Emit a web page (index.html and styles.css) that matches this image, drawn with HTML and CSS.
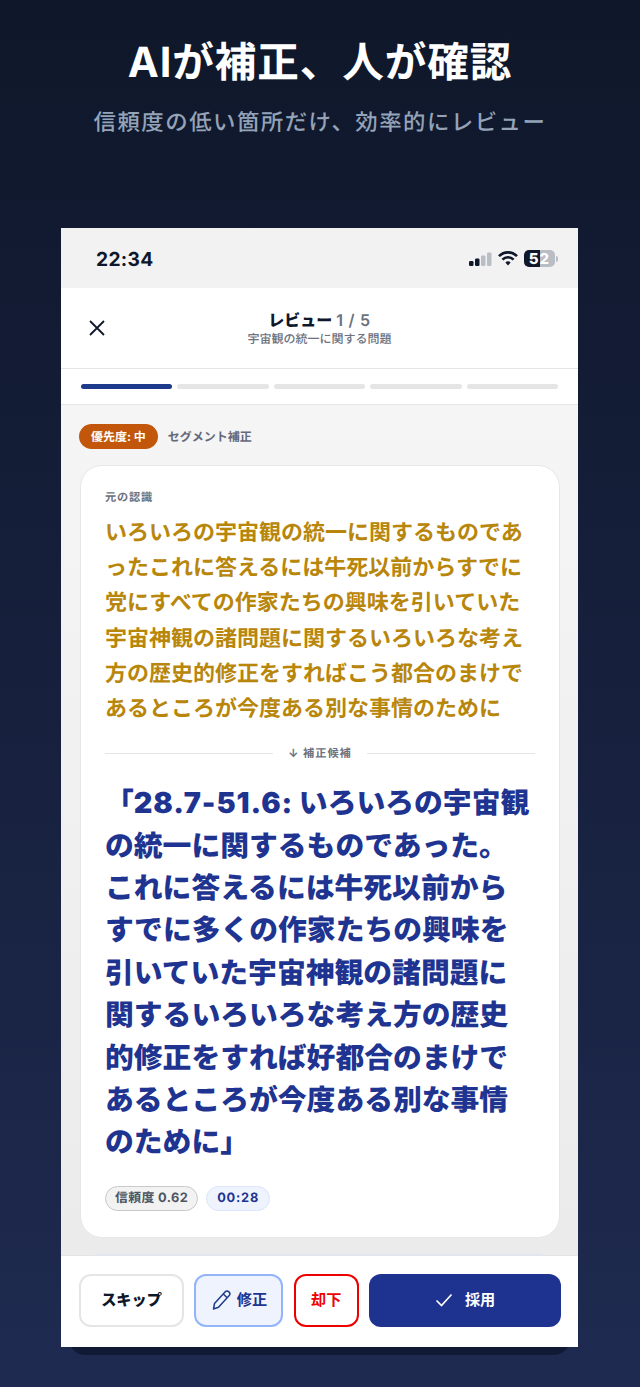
FILE: index.html
```html
<!DOCTYPE html>
<html lang="ja">
<head>
<meta charset="utf-8">
<title>レビュー</title>
<link rel="stylesheet" href="styles.css">
</head>
<body>
<div class="page">
  <header class="hero">
    <h1>AIが補正、人が確認</h1>
    <p>信頼度の低い箇所だけ、効率的にレビュー</p>
  </header>
  <div class="phone">
    <div class="status">
      <span class="time">22:34</span>
      <div class="status-icons">
        <svg class="signal" width="24" height="14" viewBox="0 0 24 14"><rect x="1" y="9" width="4.5" height="5" rx="1.2" fill="#0f172a"/><rect x="7" y="6.500" width="4.500" height="7.500" rx="1.200" fill="#0f172a"/><rect x="13" y="3.500" width="4.500" height="10.500" rx="1.200" fill="#b9bdc4"/><rect x="19" y="0.500" width="4.500" height="13.500" rx="1.200" fill="#b9bdc4"/></svg>
        <svg class="wifi" width="20" height="15" viewBox="0 0 20 15"><path d="M1 5.200 A12.500 12.500 0 0 1 19 5.200" fill="none" stroke="#0f172a" stroke-width="2.600"/><path d="M4.400 8.600 A8 8 0 0 1 15.600 8.600" fill="none" stroke="#0f172a" stroke-width="2.600"/><path d="M7.400 11.500 L10 14.500 L12.600 11.500 A3.600 3.600 0 0 0 7.400 11.500Z" fill="#0f172a"/></svg>
        <div class="battery"><span class="bat-num">52</span></div>
      </div>
    </div>
    <div class="nav">
      <svg class="close" width="20" height="20" viewBox="0 0 20 20"><path d="M3 3 L17 17 M17 3 L3 17" stroke="#0f172a" stroke-width="1.800" fill="none"/></svg>
      <div class="nav-title">
        <div class="nav-main"><b>レビュー</b> <span>1 / 5</span></div>
        <div class="nav-sub">宇宙観の統一に関する問題</div>
      </div>
    </div>
    <div class="progress">
      <i class="seg on"></i><i class="seg"></i><i class="seg"></i><i class="seg"></i><i class="seg"></i>
    </div>
    <main class="content">
      <div class="tags">
        <span class="priority">優先度: 中</span>
        <span class="tag-text">セグメント補正</span>
      </div>
      <section class="card">
        <div class="label">元の認識</div>
        <p class="original">いろいろの宇宙観の統一に関するものであ<br>ったこれに答えるには牛死以前からすでに<br>党にすべての作家たちの興味を引いていた<br>宇宙神観の諸問題に関するいろいろな考え<br>方の歴史的修正をすればこう都合のまけで<br>あるところが今度ある別な事情のために</p>
        <div class="divider"><span class="rule"></span><span class="div-text">↓ 補正候補</span><span class="rule"></span></div>
        <p class="fixed">「<span class="stamp">28.7-51.6:</span> いろいろの宇宙観<br>の統一に関するものであった。<br>これに答えるには牛死以前から<br>すでに多くの作家たちの興味を<br>引いていた宇宙神観の諸問題に<br>関するいろいろな考え方の歴史<br>的修正をすれば好都合のまけで<br>あるところが今度ある別な事情<br>のために」</p>
        <div class="chips">
          <span class="chip grey">信頼度 0.62</span>
          <span class="chip blue">00:28</span>
        </div>
      </section>
      <div class="next-card"></div>
    </main>
    <footer class="actions">
      <button class="btn skip">スキップ</button>
      <button class="btn edit"><svg width="20" height="22" viewBox="0 0 20 22"><path d="M2.500 20 L3.500 14.500 L14 3 A2.600 2.600 0 0 1 18 6.800 L7.500 18.300 Z M12.300 5 L16.200 8.800" fill="none" stroke="#1e3a8a" stroke-width="1.500" stroke-linejoin="round"/></svg>修正</button>
      <button class="btn reject">却下</button>
      <button class="btn adopt"><svg width="18" height="14" viewBox="0 0 18 14"><path d="M1.500 7.500 L6.500 12.500 L16.500 1.500" fill="none" stroke="#fff" stroke-width="1.700"/></svg>採用</button>
    </footer>
  </div>
</div>
</body>
</html>
```
FILE: styles.css
```css
* { box-sizing: border-box; margin: 0; padding: 0; }
html, body { width: 640px; height: 1387px; overflow: hidden; }
body {
  font-family: Inter, "Noto Sans CJK JP", sans-serif;
  text-rendering: geometricPrecision;
  background: linear-gradient(180deg, #0f172a 0%, #1e2a50 100%);
}
.page { height: 1387px; display: flex; flex-direction: column; align-items: center; }
.hero { height: 228px; padding-top: 35px; text-align: center; flex: none; }
.hero h1 { font-size: 41.600px; line-height: 56px; font-weight: 700; color: #fff; white-space: nowrap; letter-spacing: 0.9px; }
.hero p { margin-top: 16px; font-size: 22.400px; line-height: 32px; color: #94a3b8; letter-spacing: 1.500px; font-weight: 500; white-space: nowrap; }

.phone {
  position: relative;
  width: 517px;
  height: 1119px;
  margin-left: -1px;
  background: #f2f2f2;
  display: flex;
  flex-direction: column;
  flex: none;
}
.phone::after {
  content: "";
  position: absolute;
  left: 8px; right: 8px; bottom: -8px;
  height: 30px;
  border-radius: 0 0 16px 16px;
  background: #111a35;
  z-index: -1;
}
.status {
  height: 60px; flex: none;
  display: flex; align-items: center; justify-content: space-between;
  padding: 1px 20px 0 35px;
  background: #f2f2f2;
}
.time { font-size: 19.200px; font-weight: 700; color: #0f172a; letter-spacing: 0.3px; }
.status-icons { display: flex; align-items: center; gap: 6px; }
.battery {
  position: relative; width: 31px; height: 17px; border-radius: 5px;
  background: linear-gradient(90deg, #0f172a 0, #0f172a 52%, #b9bdc4 52%, #b9bdc4 100%);
  text-align: center; margin-right: 3px;
}
.battery::after {
  content: ""; position: absolute; right: -3px; top: 5.500px; width: 2px; height: 6px;
  border-radius: 0 2px 2px 0; background: #b9bdc4;
}
.bat-num { display: block; font-size: 15px; line-height: 17px; font-weight: 800; color: #fff; letter-spacing: 1px; }

.nav {
  position: relative; height: 81px; flex: none; background: #fff;
  border-bottom: 1px solid #e5e5e5;
  display: flex; align-items: center; justify-content: center;
}
.close { position: absolute; left: 26px; top: 30px; }
.nav-title { text-align: center; margin-top: -2px; }
.nav-main { font-size: 16px; line-height: 22px; color: #64748b; font-weight: 600; }
.nav-main b { color: #0f172a; font-weight: 900; }
.nav-main span { color: #6b7280; letter-spacing: 0.7px; }
.nav-sub { font-size: 12px; line-height: 15px; color: #6b7280; font-weight: 500; }

.progress {
  height: 36px; flex: none; background: #fff; border-bottom: 1px solid #e5e5e5;
  display: flex; gap: 5px; padding: 15px 20px 0;
}
.seg { flex: 1; height: 5px; border-radius: 3px; background: #e5e5e5; }
.seg.on { background: #1e3a8a; }

.content {
  flex: 1; min-height: 0; overflow: hidden;
  background: linear-gradient(180deg, #f5f5f5, #ebebeb);
  padding: 19px 18px 0;
}
.tags { display: flex; align-items: center; gap: 10px; height: 25px; }
.priority {
  background: #c2570c; color: #fff; font-size: 12px; font-weight: 700;
  height: 25px; line-height: 25px; padding: 0 12px; border-radius: 13px;
}
.tag-text { font-size: 12px; font-weight: 600; color: #64687a; }

.card {
  margin: 16px 0 0 1px; height: 773px;
  background: #fff; border: 1px solid #e7e7e7; border-radius: 22px;
  padding: 23px 24px 0;
}
.label { font-size: 11.200px; line-height: 16px; font-weight: 700; color: #6b7280; letter-spacing: 0.8px; }
.original {
  margin-top: 11px; font-size: 22px; line-height: 35.200px; font-weight: 700; color: #b8860b; white-space: nowrap;
}
.divider { display: flex; align-items: center; gap: 10px; margin-top: 18px; height: 16px; }
.rule { flex: 1; height: 1px; background: #e5e5e5; }
.div-text { font-size: 11.200px; font-weight: 700; color: #6b7280; letter-spacing: 1px; padding: 0 5px; }
.fixed {
  margin-top: 21px; font-size: 28.800px; line-height: 42.400px; font-weight: 900; color: #1e3490; white-space: nowrap;
}
.stamp { letter-spacing: 0.9px; }
.chips { display: flex; gap: 8px; margin-top: 22px; }
.chip { height: 25px; line-height: 23px; border-radius: 13px; font-size: 12.800px; font-weight: 700; border: 1px solid; letter-spacing: 0.4px; }
.chip.grey { padding: 0 9px; background: #f2f2f2; border-color: #c9c9c9; color: #4b5563; }
.chip.blue { padding: 0 10px; background: #eef3fe; border-color: #dbe5fb; color: #1e3490; letter-spacing: 0.8px; }
.next-card { margin: 16px 6px 0; height: 30px; background: #eef3fe; border: 1px solid #dbe5fb; border-radius: 20px; }

.actions {
  position: relative; height: 92px; flex: none; background: #fff;
  border-top: 1px solid #e5e5e5;
  display: flex; gap: 10.400px; padding: 18px 17px 0 18px;
}
.btn {
  height: 53px; border-radius: 12px; background: #fff;
  font-family: inherit; font-size: 15.200px; font-weight: 700; line-height: 20px; padding-bottom: 2px;
  display: flex; align-items: center; justify-content: center; gap: 6px;
}
.skip { width: 105px; border: 2px solid #e5e5e5; color: #0f172a; font-weight: 900; }
.edit { width: 89px; border: 2px solid #93b4f8; background: #eef3fe; color: #1e3490; }
.reject { width: 65px; border: 2px solid #ee0000; color: #ee0000; }
.adopt { flex: 1; border: none; background: #1e3390; color: #fff; gap: 12px; }
```
